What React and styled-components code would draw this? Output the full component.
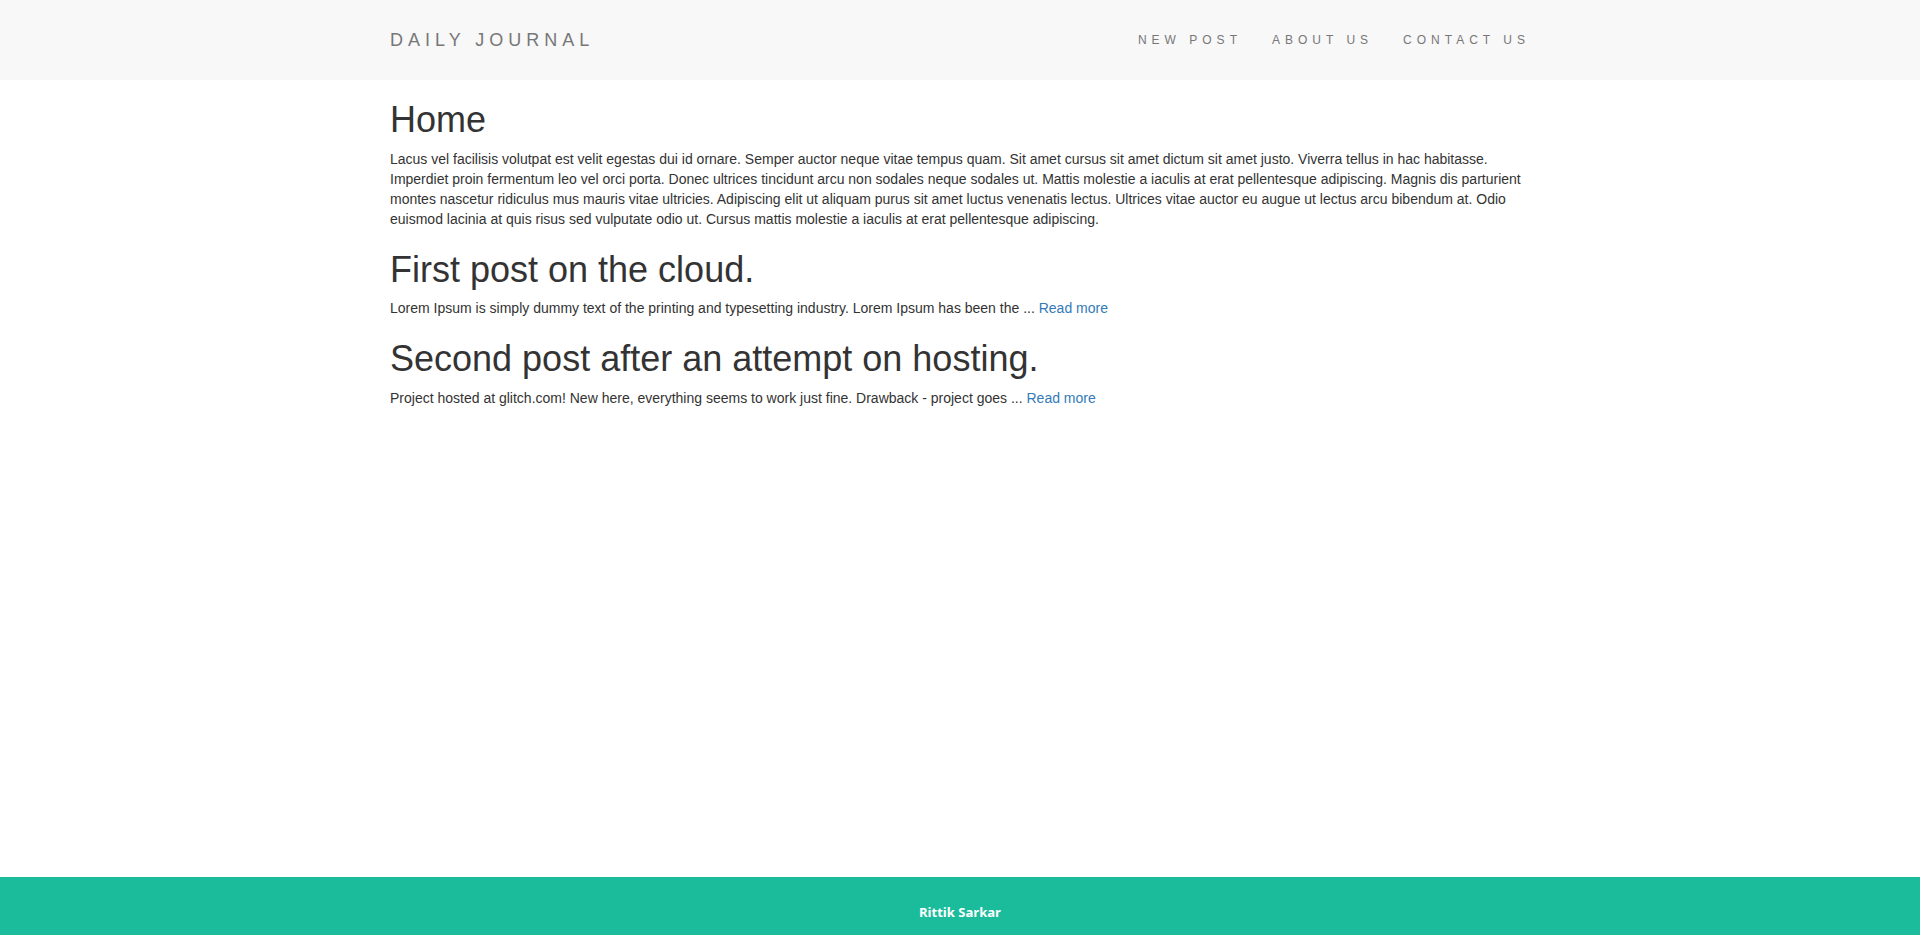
import React from "react";
import styled, { createGlobalStyle } from "styled-components";

const Global = createGlobalStyle`
  * { box-sizing: border-box; }
  html, body { margin: 0; padding: 0; }
  body {
    font-family: "Liberation Sans", Arial, Helvetica, sans-serif;
    font-size: 14px;
    line-height: 1.42857;
    color: #333;
    background: #fff;
  }
`;

const Page = styled.div`
  min-height: 100vh;
  display: flex;
  flex-direction: column;
`;

const NavBar = styled.nav`
  background: #f8f8f8;
  height: 80px;
`;

const Container = styled.div`
  width: 1170px;
  margin: 0 auto;
  padding: 0 15px;
`;

const NavInner = styled(Container)`
  height: 100%;
  padding-top: 2px;
  display: flex;
  align-items: center;
  justify-content: space-between;
`;

const Brand = styled.a`
  font-size: 18px;
  letter-spacing: 5px;
  color: #777;
  text-decoration: none;
  text-transform: uppercase;
`;

const NavList = styled.ul`
  list-style: none;
  margin: 0 -15px 0 0;
  padding: 0;
  display: flex;
`;

const NavLink = styled.a`
  display: block;
  padding: 0 15px;
  font-size: 12px;
  letter-spacing: 5px;
  color: #777;
  text-decoration: none;
  text-transform: uppercase;
`;

const Main = styled(Container)`
  flex: 1;
  padding-top: 20px;
`;

const Title = styled.h1`
  font-size: 36px;
  font-weight: 500;
  line-height: 1.1;
  margin: 0 0 10px;
  color: #333;
  p + & { margin-top: 20px; }
`;

const Text = styled.p`
  margin: 0 0 10px;
`;

const ReadMore = styled.a`
  color: #337ab7;
  text-decoration: none;
`;

const Footer = styled.footer`
  background: #1abc9c;
  height: 58px;
  padding-top: 25px;
  text-align: center;
`;

const FooterText = styled.p`
  margin: 0;
  font-family: "Open Sans", sans-serif;
  font-weight: 700;
  font-size: 13px;
  line-height: 20px;
  color: #fff;
`;

const posts = [
  {
    title: "First post on the cloud.",
    body: "Lorem Ipsum is simply dummy text of the printing and typesetting industry. Lorem Ipsum has been the ...",
  },
  {
    title: "Second post after an attempt on hosting.",
    body: "Project hosted at glitch.com! New here, everything seems to work just fine. Drawback - project goes ...",
  },
];

export default function App() {
  return (
    <Page>
      <Global />
      <NavBar>
        <NavInner>
          <Brand href="#">Daily Journal</Brand>
          <NavList>
            <li><NavLink href="#">New Post</NavLink></li>
            <li><NavLink href="#">About Us</NavLink></li>
            <li><NavLink href="#">Contact Us</NavLink></li>
          </NavList>
        </NavInner>
      </NavBar>
      <Main as="main">
        <Title>Home</Title>
        <Text>
          Lacus vel facilisis volutpat est velit egestas dui id ornare. Semper auctor neque vitae tempus quam. Sit amet cursus sit amet dictum sit amet justo. Viverra tellus in hac habitasse. Imperdiet proin fermentum leo vel orci porta. Donec ultrices tincidunt arcu non sodales neque sodales ut. Mattis molestie a iaculis at erat pellentesque adipiscing. Magnis dis parturient montes nascetur ridiculus mus mauris vitae ultricies. Adipiscing elit ut aliquam purus sit amet luctus venenatis lectus. Ultrices vitae auctor eu augue ut lectus arcu bibendum at. Odio euismod lacinia at quis risus sed vulputate odio ut. Cursus mattis molestie a iaculis at erat pellentesque adipiscing.
        </Text>
        {posts.map((p) => (
          <React.Fragment key={p.title}>
            <Title>{p.title}</Title>
            <Text>
              {p.body} <ReadMore href="#">Read more</ReadMore>
            </Text>
          </React.Fragment>
        ))}
      </Main>
      <Footer>
        <FooterText>Rittik Sarkar</FooterText>
      </Footer>
    </Page>
  );
}
